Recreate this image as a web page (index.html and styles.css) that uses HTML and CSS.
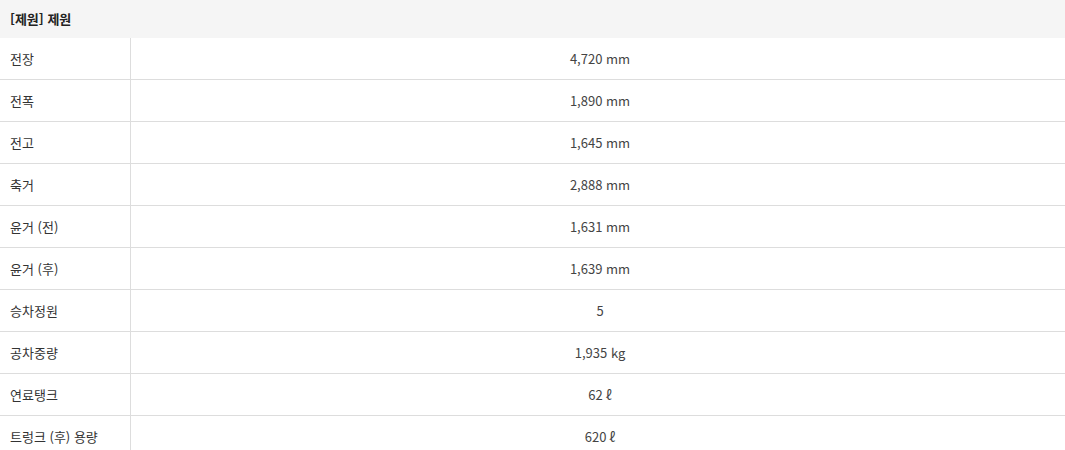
FILE: index.html
```html
<!DOCTYPE html>
<html lang="ko">
<head>
<meta charset="utf-8">
<link rel="stylesheet" href="styles.css">
</head>
<body>
<div class="spec">
  <div class="spec-title">[제원] 제원</div>
  <div class="spec-list">
    <div class="spec-row"><div class="spec-label">전장</div><div class="spec-value">4,720 mm</div></div>
    <div class="spec-row"><div class="spec-label">전폭</div><div class="spec-value">1,890 mm</div></div>
    <div class="spec-row"><div class="spec-label">전고</div><div class="spec-value">1,645 mm</div></div>
    <div class="spec-row"><div class="spec-label">축거</div><div class="spec-value">2,888 mm</div></div>
    <div class="spec-row"><div class="spec-label">윤거 (전)</div><div class="spec-value">1,631 mm</div></div>
    <div class="spec-row"><div class="spec-label">윤거 (후)</div><div class="spec-value">1,639 mm</div></div>
    <div class="spec-row"><div class="spec-label">승차정원</div><div class="spec-value">5</div></div>
    <div class="spec-row"><div class="spec-label">공차중량</div><div class="spec-value">1,935 kg</div></div>
    <div class="spec-row"><div class="spec-label">연료탱크</div><div class="spec-value">62 ℓ</div></div>
    <div class="spec-row"><div class="spec-label">트렁크 (후) 용량</div><div class="spec-value">620 ℓ</div></div>
  </div>
</div>
</body>
</html>
```
FILE: styles.css
```css
html, body {
  margin: 0;
  padding: 0;
  background: #fff;
}
body {
  font-family: "Noto Sans CJK KR", "Noto Sans", "Liberation Sans", sans-serif;
  font-size: 13px;
  color: #333;
}
.spec-title {
  height: 38px;
  line-height: 37px;
  background: #f5f5f5;
  padding-left: 10px;
  font-weight: bold;
  font-size: 13px;
  color: #222;
}
.spec-row {
  display: grid;
  grid-template-columns: 131px 1fr;
  height: 42px;
  box-sizing: border-box;
  border-bottom: 1px solid #ddd;
}
.spec-label {
  display: flex;
  align-items: center;
  padding-left: 10px;
  border-right: 1px solid #ddd;
  color: #333;
}
.spec-value {
  display: flex;
  align-items: center;
  justify-content: center;
  padding-left: 4px;
  color: #444;
}
```
